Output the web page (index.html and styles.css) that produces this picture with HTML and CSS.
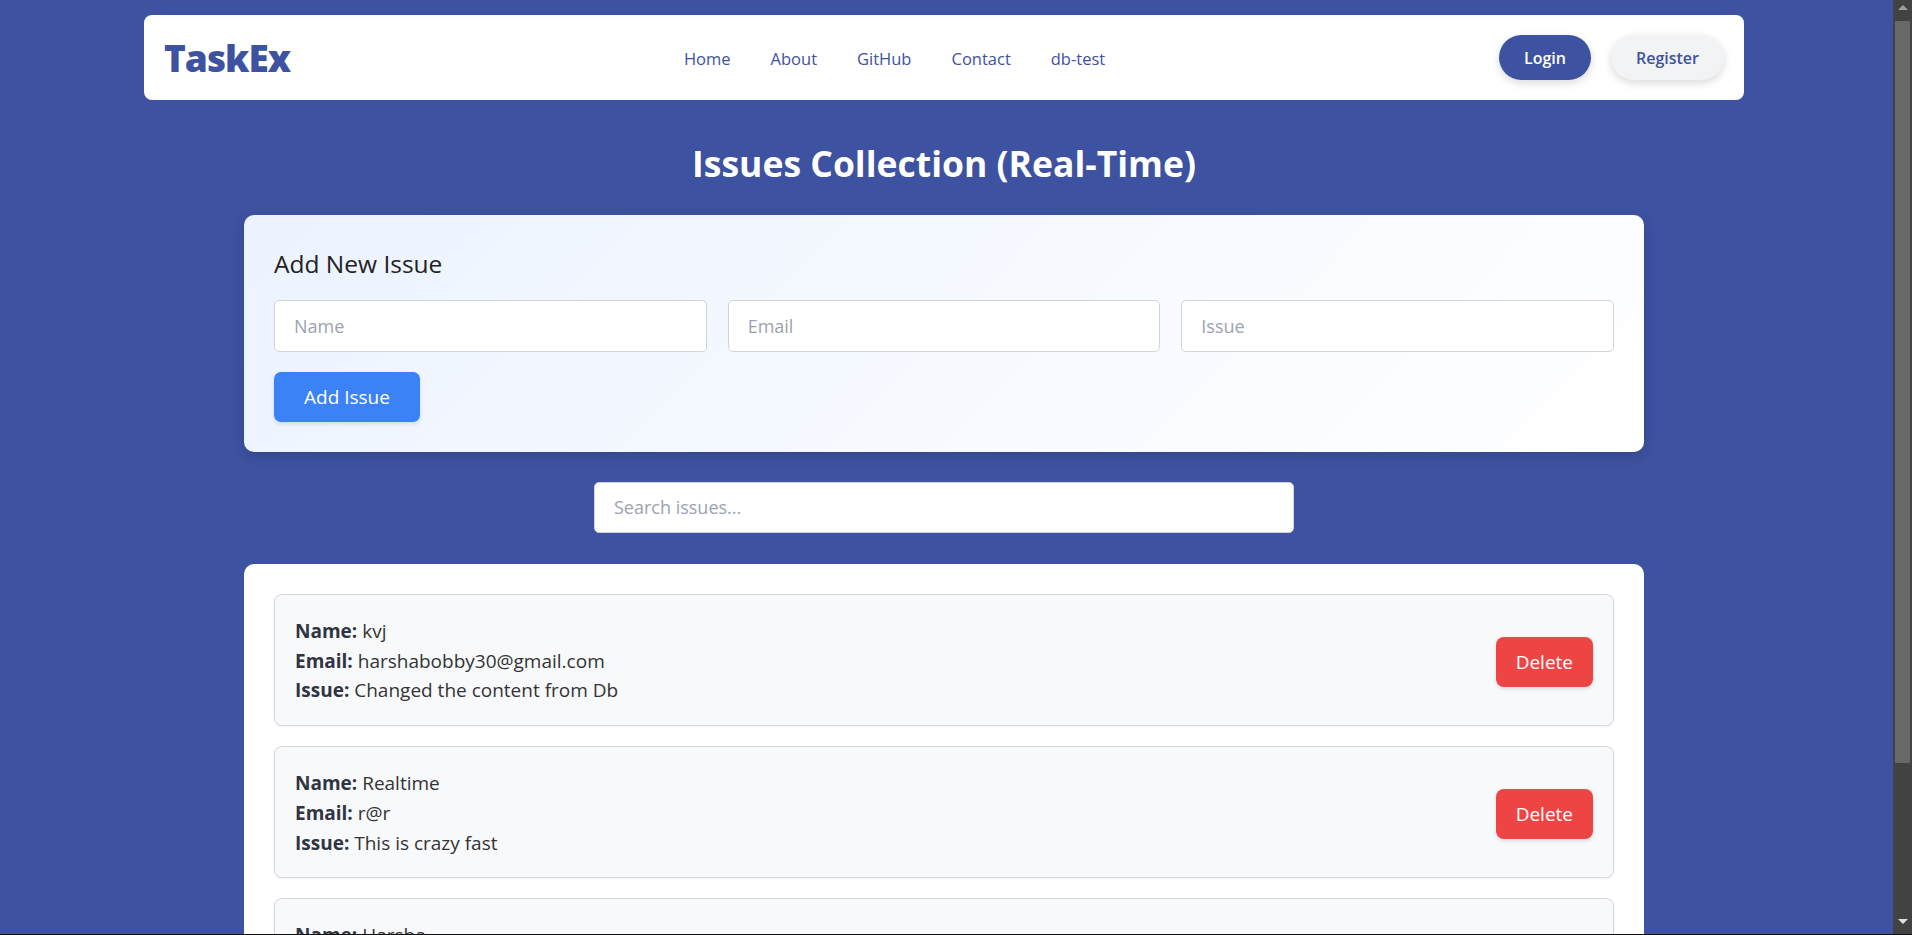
FILE: index.html
```html
<!DOCTYPE html>
<html lang="en">
<head>
<meta charset="utf-8">
<title>TaskEx - Issues</title>
<link rel="stylesheet" href="styles.css">
</head>
<body>
<div class="page">
  <nav class="navbar">
    <div class="logo">TaskEx</div>
    <ul class="nav-links">
      <li><a href="#">Home</a></li>
      <li><a href="#">About</a></li>
      <li><a href="#">GitHub</a></li>
      <li><a href="#">Contact</a></li>
      <li><a href="#">db-test</a></li>
    </ul>
    <div class="auth">
      <button class="btn-login">Login</button>
      <button class="btn-register">Register</button>
    </div>
  </nav>

  <main class="content">
    <h1 class="title">Issues Collection (Real-Time)</h1>

    <section class="form-card">
      <h3 class="form-title">Add New Issue</h3>
      <div class="form-row">
        <input class="field" type="text" placeholder="Name">
        <input class="field" type="text" placeholder="Email">
        <input class="field" type="text" placeholder="Issue">
      </div>
      <button class="btn-add">Add Issue</button>
    </section>

    <div class="search-wrap">
      <input class="search" type="text" placeholder="Search issues...">
    </div>

    <section class="list-card">
      <div class="issue">
        <div class="issue-info">
          <p><strong>Name:</strong> kvj</p>
          <p><strong>Email:</strong> harshabobby30@gmail.com</p>
          <p><strong>Issue:</strong> Changed the content from Db</p>
        </div>
        <button class="btn-delete">Delete</button>
      </div>
      <div class="issue">
        <div class="issue-info">
          <p><strong>Name:</strong> Realtime</p>
          <p><strong>Email:</strong> r@r</p>
          <p><strong>Issue:</strong> This is crazy fast</p>
        </div>
        <button class="btn-delete">Delete</button>
      </div>
      <div class="issue">
        <div class="issue-info">
          <p><strong>Name:</strong> Harsha</p>
          <p><strong>Email:</strong> harsha@gmail.com</p>
          <p><strong>Issue:</strong> Testing the issue tracker</p>
        </div>
        <button class="btn-delete">Delete</button>
      </div>
    </section>
  </main>
</div>
<div class="scrollbar">
  <div class="sb-arrow sb-up"></div>
  <div class="sb-thumb"></div>
  <div class="sb-track"></div>
  <div class="sb-arrow sb-down"></div>
</div>
</body>
</html>
```

FILE: styles.css
```css
* { box-sizing: border-box; }

html, body {
  margin: 0;
  height: 100%;
}

body {
  display: flex;
  overflow: hidden;
  background: #3d52a0;
  font-family: "Open Sans", "Noto Sans", "Liberation Sans", sans-serif;
  color: #333;
  border-bottom: 1px solid #111;
}

.page {
  flex: 1;
  min-width: 0;
  height: 100%;
  overflow: hidden;
  padding-right: 5px;
}

/* Navbar */
.navbar {
  width: 1600px;
  margin: 15px auto 0;
  height: 85px;
  padding: 0 20px;
  background: #fff;
  border-radius: 8px;
  display: flex;
  align-items: center;
  justify-content: space-between;
}

.logo {
  font-size: 37px;
  font-weight: 800;
  letter-spacing: -1px;
  color: #3d52a0;
  line-height: 1;
}

.nav-links {
  list-style: none;
  margin: 0;
  padding: 0;
  display: flex;
  gap: 40px;
  padding-top: 2px;
}

.nav-links a {
  text-decoration: none;
  color: #3d52a0;
  font-size: 16.5px;
}

.auth {
  display: flex;
  gap: 20px;
}

.auth button {
  font-family: inherit;
  font-size: 16px;
  font-weight: 600;
  height: 45px;
  padding: 0 25px;
  border: none;
  border-radius: 25px;
  box-shadow: 0 3px 8px rgba(0, 0, 0, 0.15);
}

.btn-login {
  background: #3d52a0;
  color: #fff;
}

.btn-register {
  background: #f2f3f5;
  color: #3d52a0;
}

/* Content */
.content {
  width: 1400px;
  margin: 0 auto;
}

.title {
  margin: 42px 0 30px;
  text-align: center;
  color: #fff;
  font-size: 35.5px;
  font-weight: 700;
  line-height: 1.2;
}

.form-card {
  background: linear-gradient(135deg, #ecf3ff 0%, #ffffff 100%);
  border-radius: 10px;
  padding: 30px;
  box-shadow: 0 4px 12px rgba(0, 0, 0, 0.15);
}

.form-title {
  margin: 4px 0 22px;
  font-size: 24.5px;
  font-weight: 400;
  color: #222;
  line-height: 1.2;
}

.form-row {
  display: grid;
  grid-template-columns: repeat(3, 1fr);
  gap: 21px;
}

.field, .search {
  height: 52px;
  padding: 0 19px;
  border: 1px solid #d1d5db;
  border-radius: 5px;
  background: #fff;
  font-family: inherit;
  font-size: 18px;
  color: #333;
  outline: none;
}

.field::placeholder, .search::placeholder {
  color: #9ca3af;
}

.btn-add {
  margin-top: 20px;
  height: 50px;
  padding: 0 30px;
  border: none;
  border-radius: 7px;
  background: #3b82f6;
  color: #fff;
  font-family: inherit;
  font-size: 19px;
  box-shadow: 0 2px 4px rgba(0, 0, 0, 0.12);
}

.search-wrap {
  display: flex;
  justify-content: center;
  margin-top: 30px;
}

.search {
  width: 700px;
  height: 51px;
}

.list-card {
  margin-top: 31px;
  background: #fff;
  border-radius: 10px;
  padding: 30px;
}

.issue {
  display: flex;
  align-items: center;
  justify-content: space-between;
  padding: 22px 20px 19px;
  margin-bottom: 20px;
  background: #f8f9fb;
  border: 1px solid #d4d7dd;
  border-radius: 8px;
  box-shadow: 0 1px 3px rgba(0, 0, 0, 0.05);
}

.issue-info p {
  margin: 0;
  font-size: 19px;
  line-height: 29.7px;
  color: #333;
}

.issue-info strong {
  color: #2f3542;
}

.btn-delete {
  height: 50px;
  padding: 0 20px;
  border: none;
  border-radius: 8px;
  background: #ef4444;
  color: #fff;
  font-family: inherit;
  font-size: 19px;
  box-shadow: 0 2px 4px rgba(0, 0, 0, 0.12);
}

/* Fake window scrollbar */
.scrollbar {
  width: 19px;
  height: 100%;
  background: #424242;
  display: flex;
  flex-direction: column;
  align-items: center;
}

.sb-arrow {
  width: 0;
  height: 0;
  border-left: 5px solid transparent;
  border-right: 5px solid transparent;
}

.sb-up {
  margin-top: 5px;
  border-bottom: 5px solid #9e9e9e;
}

.sb-thumb {
  margin-top: 11px;
  width: 15px;
  height: 742px;
  background: #686868;
}

.sb-track {
  flex: 1;
}

.sb-down {
  margin-bottom: 10px;
  border-top: 5px solid #e0e0e0;
}
```
